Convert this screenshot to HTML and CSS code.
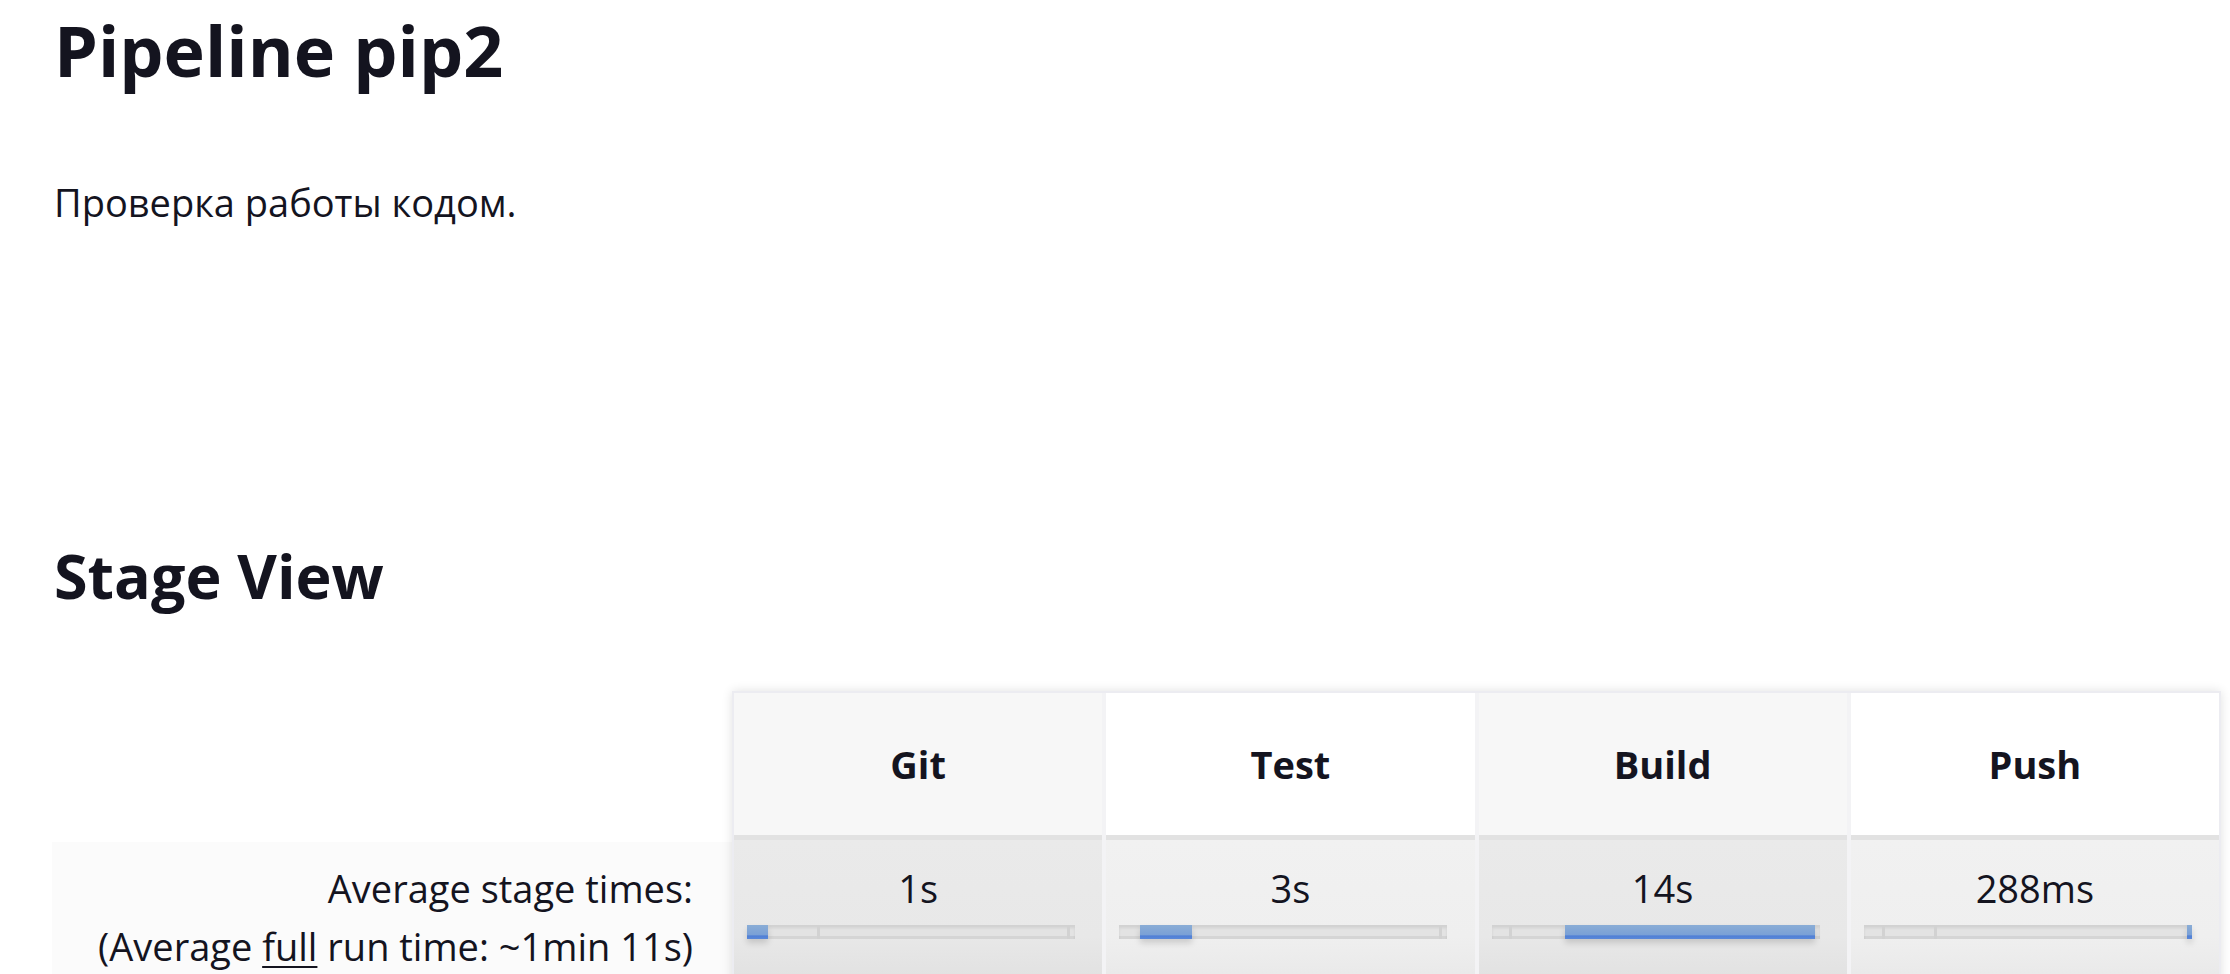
FILE: index.html
```html
<!DOCTYPE html>
<html lang="ru">
<head>
<meta charset="utf-8">
<title>Pipeline pip2</title>
<link rel="stylesheet" href="styles.css">
</head>
<body>
<main class="page">
  <h1 class="title">Pipeline pip2</h1>
  <div class="desc">Проверка работы кодом.</div>
  <h2 class="section-title">Stage View</h2>

  <div class="stage-view">
    <div class="labels">
      <div class="labels-head"></div>
      <div class="labels-row">
        <div class="label-line">Average stage times:</div>
        <div class="label-line">(Average <u>full</u> run time: ~1min 11s)</div>
      </div>
    </div>

    <div class="stage-table">
      <div class="stage-col odd">
        <div class="stage-head">Git</div>
        <div class="stage-cell">
          <div class="dur">1s</div>
          <div class="bar">
            <span class="seg active" style="width:6.4%"></span>
            <span class="seg divider" style="width:15.9%"></span>
            <span class="seg divider" style="width:76.2%"></span>
            <span class="seg" style="width:1.5%"></span>
          </div>
        </div>
      </div>
      <div class="stage-col even">
        <div class="stage-head">Test</div>
        <div class="stage-cell">
          <div class="dur">3s</div>
          <div class="bar">
            <span class="seg" style="width:6.4%"></span>
            <span class="seg active" style="width:15.9%"></span>
            <span class="seg divider" style="width:76.2%"></span>
            <span class="seg" style="width:1.5%"></span>
          </div>
        </div>
      </div>
      <div class="stage-col odd">
        <div class="stage-head">Build</div>
        <div class="stage-cell">
          <div class="dur">14s</div>
          <div class="bar">
            <span class="seg divider" style="width:6.4%"></span>
            <span class="seg" style="width:15.9%"></span>
            <span class="seg active" style="width:76.2%"></span>
            <span class="seg" style="width:1.5%"></span>
          </div>
        </div>
      </div>
      <div class="stage-col even">
        <div class="stage-head">Push</div>
        <div class="stage-cell">
          <div class="dur">288ms</div>
          <div class="bar">
            <span class="seg divider" style="width:6.4%"></span>
            <span class="seg divider" style="width:15.9%"></span>
            <span class="seg" style="width:76.2%"></span>
            <span class="seg active" style="width:1.5%"></span>
          </div>
        </div>
      </div>
    </div>
  </div>
</main>
</body>
</html>
```

FILE: styles.css
```css
html, body {
  margin: 0;
  padding: 0;
  background: #ffffff;
}

body {
  font-family: "Open Sans", "Noto Sans", "Liberation Sans", sans-serif;
  color: #14141f;
  overflow: hidden;
}

.page {
  padding: 9px 0 0 54px;
}

.title {
  margin: 0;
  font-size: 70px;
  line-height: 82px;
  font-weight: 700;
}

.desc {
  margin-top: 83px;
  font-size: 38px;
  line-height: 56px;
}

.section-title {
  margin: 305px 0 0 0;
  font-size: 61px;
  line-height: 82px;
  font-weight: 700;
}

.stage-view {
  display: flex;
  margin: 74px 0 0 -2px;
  font-size: 38px;
}

.labels {
  width: 680px;
  display: flex;
  flex-direction: column;
}

.labels-head {
  height: 151px;
}

.labels-row {
  background: #fbfbfb;
  padding: 17px 39px 0 0;
  text-align: right;
  flex: 1;
}

.label-line {
  line-height: 58px;
}

.label-line u {
  text-decoration-thickness: 2px;
  text-underline-offset: 5px;
}

.stage-table {
  display: flex;
  gap: 4px;
  width: 1485px;
  border: 2px solid #ececf1;
  background: #f3f3f5;
  box-shadow: 0 0 10px rgba(0, 0, 0, 0.12);
}

.stage-col {
  flex: 1;
  display: flex;
  flex-direction: column;
}

.stage-head {
  height: 142px;
  display: flex;
  align-items: center;
  justify-content: center;
  font-weight: 700;
  border-bottom: 5px solid #e2e2e2;
}

.odd .stage-head { background: #f7f7f7; }
.even .stage-head { background: #ffffff; }

.stage-cell {
  height: 160px;
  padding-top: 19px;
  box-sizing: border-box;
}

.odd .stage-cell { background: linear-gradient(#eaeaea 0%, #e8e8e8 60%, #dedede 100%); }
.even .stage-cell { background: linear-gradient(#f1f1f1 0%, #efefef 60%, #e6e6e6 100%); }

.dur {
  text-align: center;
  line-height: 58px;
}

.bar {
  display: flex;
  width: 328px;
  height: 14px;
  margin: 8px 0 0 13px;
  background: #e3e3e3;
  box-shadow: inset 0 3px 3px rgba(0, 0, 0, 0.08), inset 0 -3px 0 #d5d5d5;
}

.seg {
  display: block;
  height: 14px;
  box-sizing: border-box;
}

.seg.divider {
  border-right: 3px solid #d2d2d2;
}

.seg.active {
  background: linear-gradient(#8aadd6 0%, #7aa0d6 70%, #4f7fd6 78%, #5b88d8 100%);
  box-shadow: 0 4px 6px rgba(0, 0, 0, 0.15);
}
```
